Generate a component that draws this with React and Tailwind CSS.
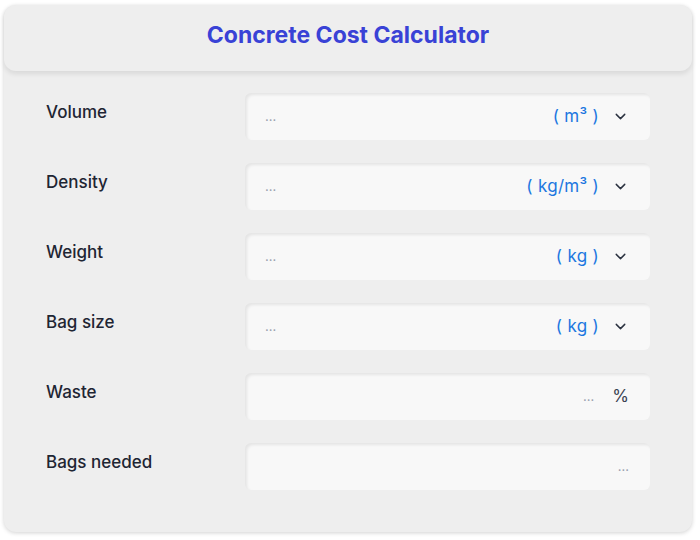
import { ChevronDown } from "lucide-react";

const FIELDS = [
  { label: "Volume", unit: "( m³ )", select: true },
  { label: "Density", unit: "( kg/m³ )", select: true },
  { label: "Weight", unit: "( kg )", select: true },
  { label: "Bag size", unit: "( kg )", select: true },
  { label: "Waste", suffix: "%" },
  { label: "Bags needed", output: true },
];

function Field({ f }) {
  return (
    <div className="flex items-start">
      <label className="w-[199px] shrink-0 pt-[7px] text-[17px] font-medium text-[#1e2533]">{f.label}</label>
      <div className="flex h-[47px] flex-1 items-center rounded-md bg-[#f8f8f8] px-5 shadow-[inset_2px_2px_3px_rgba(0,0,0,0.08)]">
        {f.select && (
          <>
            <span className="flex-1 text-[13px] text-gray-400">...</span>
            <span className="text-[17px] tracking-[0.3px] text-[#1c77e0]">{f.unit}</span>
            <ChevronDown className="ml-[13px] mr-[1px] h-[17px] w-[17px] text-[#2b3240]" strokeWidth={2} />
          </>
        )}
        {f.suffix && (
          <>
            <span className="flex-1 text-right text-[13px] text-gray-400">...</span>
            <span className="ml-[18px] mr-[1px] text-[17px] text-[#3b4252]">{f.suffix}</span>
          </>
        )}
        {f.output && <span className="flex-1 pr-[1px] text-right text-[13px] text-gray-400">...</span>}
      </div>
    </div>
  );
}

export default function App() {
  return (
    <div className="min-h-[540px] bg-white px-[4px] pt-[5px] font-['Inter',sans-serif]">
      <div className="w-[688px] rounded-xl bg-[#eeeeee] pb-[42px] shadow-[0_1px_4px_rgba(0,0,0,0.18)]">
        <div className="flex h-[66px] items-center justify-center rounded-xl bg-[#eeeeee] pb-[6px] shadow-[0_3px_5px_rgba(0,0,0,0.09)]">
          <h1 className="text-[23px] font-bold text-[#3942d6]">Concrete Cost Calculator</h1>
        </div>
        <div className="mt-[22px] flex flex-col gap-[23px] pl-[42px] pr-[42px]">
          {FIELDS.map((f) => (
            <Field key={f.label} f={f} />
          ))}
        </div>
      </div>
    </div>
  );
}
